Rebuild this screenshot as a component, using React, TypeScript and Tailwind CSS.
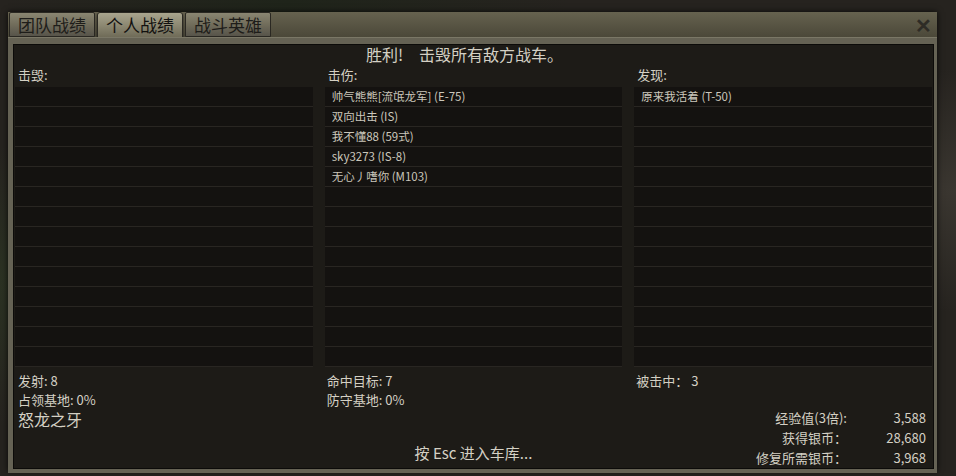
import React from 'react';

const killed: string[] = [];
const damaged = ['帅气熊熊[流氓龙军] (E-75)', '双向出击 (IS)', '我不懂88 (59式)', 'sky3273 (IS-8)', '无心丿嗜你 (M103)'];
const spotted = ['原来我活着 (T-50)'];

const ROWS = 14;

function ListColumn({ label, items }: { label: string; items: string[] }) {
	const rows = Array.from({ length: ROWS }, (_, i) => items[i] ?? '');
	return (
		<div className="flex flex-col">
			<div className="h-[24px] pl-[3px] pt-[3px] text-[13px] leading-[18px] text-[#d4d0c4]">{label}</div>
			<div className="flex flex-col">
				{rows.map((item, i) => (
					<div
						key={i}
						className="h-[20px] border-b border-[#292622] bg-[#141210] pl-[7px] text-[11.5px] leading-[19px] text-[#cbc7bb]"
					>
						{item}
					</div>
				))}
			</div>
		</div>
	);
}

function Tab({ label, active }: { label: string; active?: boolean }) {
	return (
		<div
			className={
				active
					? 'flex h-[26px] items-center rounded-t-[3px] border border-[#2a2822] bg-gradient-to-b from-[#a9a58e] via-[#8d8973] to-[#6f6b58] px-[8px] text-[17px] text-[#121110] shadow-[0_2px_3px_rgba(0,0,0,0.6)]'
					: 'flex h-[25px] items-center rounded-t-[2px] border border-[#2a2822] bg-gradient-to-b from-[#8a8672] via-[#716d5b] to-[#57544a] px-[8px] text-[17px] text-[#1e1d1a]'
			}
		>
			{label}
		</div>
	);
}

export default function App() {
	return (
		<div className="h-[476px] w-[956px] overflow-hidden bg-[#26231f] bg-[radial-gradient(ellipse_at_5%_60%,#2c3323_0%,transparent_35%),radial-gradient(ellipse_at_30%_0%,#1f241a_0%,transparent_30%),radial-gradient(ellipse_at_100%_40%,#3a3630_0%,transparent_30%)] pl-[8px] pt-[12px] font-['Noto_Sans_CJK_SC','Noto_Sans',sans-serif]">
			<div className="flex h-[459px] w-[929px] flex-col shadow-[0_0_6px_rgba(0,0,0,0.8)]">
				{/* title bar with tabs */}
				<div className="flex h-[25px] items-start bg-gradient-to-b from-[#66624f] to-[#4b4839]">
					<div className="flex gap-[2px] pl-[1px]">
						<Tab label="团队战绩" />
						<Tab label="个人战绩" active />
						<Tab label="战斗英雄" />
					</div>
					<div className="ml-auto mr-[5px] mt-[4px] text-[20px] font-bold leading-[18px] text-[#2e2c26]">✕</div>
				</div>

				{/* frame */}
				<div className="flex-1 border-t border-[#7a7766] bg-[#656254] pb-[4px] pl-[5px] pr-[3px] pt-[6px]">
					<div className="flex h-full flex-col border border-[#0c0b09] bg-[#1d1b17] text-[#d4d0c4]">
						<div className="h-[18px] pr-[18px] text-center text-[16px] leading-[18px]">胜利!　击毁所有敌方战车。</div>

						<div className="grid grid-cols-3 gap-x-[12px] px-[1px]">
							<ListColumn label="击毁:" items={killed} />
							<ListColumn label="击伤:" items={damaged} />
							<ListColumn label="发现:" items={spotted} />
						</div>

						<div className="grid grid-cols-3 gap-x-[12px] px-[1px] pt-[4px] text-[13px]">
							<div className="pl-[3px]">
								<div className="leading-[20px]">发射: 8</div>
								<div className="leading-[18px]">占领基地: 0%</div>
							</div>
							<div className="pl-[2px]">
								<div className="leading-[20px]">命中目标: 7</div>
								<div className="leading-[18px]">防守基地: 0%</div>
							</div>
							<div className="pl-[2px]">
								<div className="leading-[20px]">被击中：&nbsp;3</div>
							</div>
						</div>

						<div className="grid grid-cols-3 gap-x-[12px] px-[1px]">
							<div className="pl-[3px] pt-[1px] text-[16px] leading-[18px]">怒龙之牙</div>
							<div className="flex items-end justify-center pb-[6px] text-[15px] leading-[18px]">按 Esc 进入车库...</div>
							<div className="-mt-[1px] flex flex-col pr-[6px] text-[13px] leading-[20px]">
								<div className="flex justify-end">
									<span>经验值(3倍):</span>
									<span className="w-[79px] text-right">3,588</span>
								</div>
								<div className="flex justify-end">
									<span>获得银币：</span>
									<span className="w-[79px] text-right">28,680</span>
								</div>
								<div className="flex justify-end">
									<span>修复所需银币：</span>
									<span className="w-[79px] text-right">3,968</span>
								</div>
							</div>
						</div>
					</div>
				</div>
			</div>
		</div>
	);
}
